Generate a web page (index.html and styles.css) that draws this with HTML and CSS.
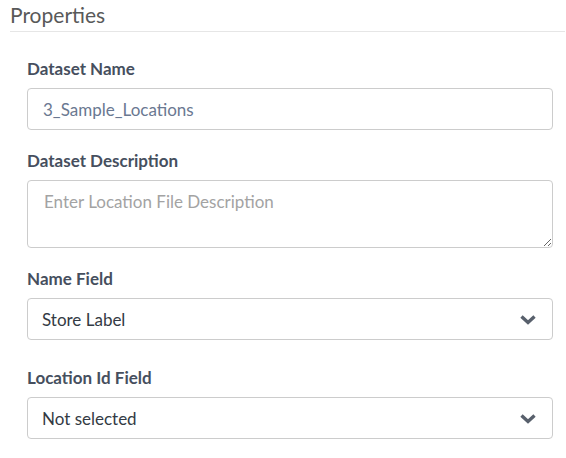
FILE: index.html
```html
<!DOCTYPE html>
<html>
<head>
<meta charset="utf-8">
<link rel="stylesheet" href="styles.css">
</head>
<body>
<div class="panel">
  <div class="panel-header">Properties</div>
  <form class="form">
    <div class="field">
      <label class="label">Dataset Name</label>
      <input class="control input" type="text" value="3_Sample_Locations">
    </div>
    <div class="field">
      <label class="label">Dataset Description</label>
      <textarea class="control textarea" placeholder="Enter Location File Description"></textarea>
    </div>
    <div class="field field-select">
      <label class="label">Name Field</label>
      <div class="control select"><span class="select-text">Store Label</span>
        <svg class="chevron" width="18" height="11" viewBox="0 0 18 11"><path d="M2.5 2.5 L9 8.5 L15.5 2.5" fill="none" stroke="#58606c" stroke-width="3.4"/></svg>
      </div>
    </div>
    <div class="field">
      <label class="label">Location Id Field</label>
      <div class="control select"><span class="select-text">Not selected</span>
        <svg class="chevron" width="18" height="11" viewBox="0 0 18 11"><path d="M2.5 2.5 L9 8.5 L15.5 2.5" fill="none" stroke="#58606c" stroke-width="3.4"/></svg>
      </div>
    </div>
  </form>
</div>
</body>
</html>
```

FILE: styles.css
```css
html, body {
  margin: 0;
  padding: 0;
  background: #ffffff;
}
body {
  font-family: "Lato", "Open Sans", sans-serif;
  width: 566px;
  height: 458px;
  overflow: hidden;
}
.panel {
  display: flex;
  flex-direction: column;
}
.panel-header {
  margin-left: 10px;
  margin-right: 1px;
  font-size: 21px;
  line-height: 24px;
  padding-top: 3px;
  padding-bottom: 4px;
  color: #595959;
  border-bottom: 1px solid #e6e6e6;
}
.form {
  display: flex;
  flex-direction: column;
  padding: 26px 13px 0 27px;
  gap: 20px;
}
.field {
  display: flex;
  flex-direction: column;
  gap: 9px;
}
.field-select {
  margin-bottom: 7px;
}
.label {
  font-weight: bold;
  font-size: 17px;
  line-height: 20px;
  padding-top: 1px;
  color: #464f5e;
}
.control {
  box-sizing: border-box;
  width: 526px;
  border: 1px solid #cccccc;
  border-radius: 4px;
  font-family: "Lato", "Open Sans", sans-serif;
  font-size: 17px;
  background: #fff;
  margin: 0;
}
.input {
  height: 42px;
  padding: 0 15px;
  color: #6a7891;
  outline: none;
}
.textarea {
  height: 68px;
  padding: 10px 16px;
  resize: vertical;
  outline: none;
  line-height: 22px;
}
.textarea::placeholder {
  color: #a3a3a3;
}
.select {
  height: 42px;
  display: flex;
  align-items: center;
  justify-content: space-between;
  padding: 0 15px 0 14px;
  color: #333a44;
}
.chevron {
  display: block;
}
```
